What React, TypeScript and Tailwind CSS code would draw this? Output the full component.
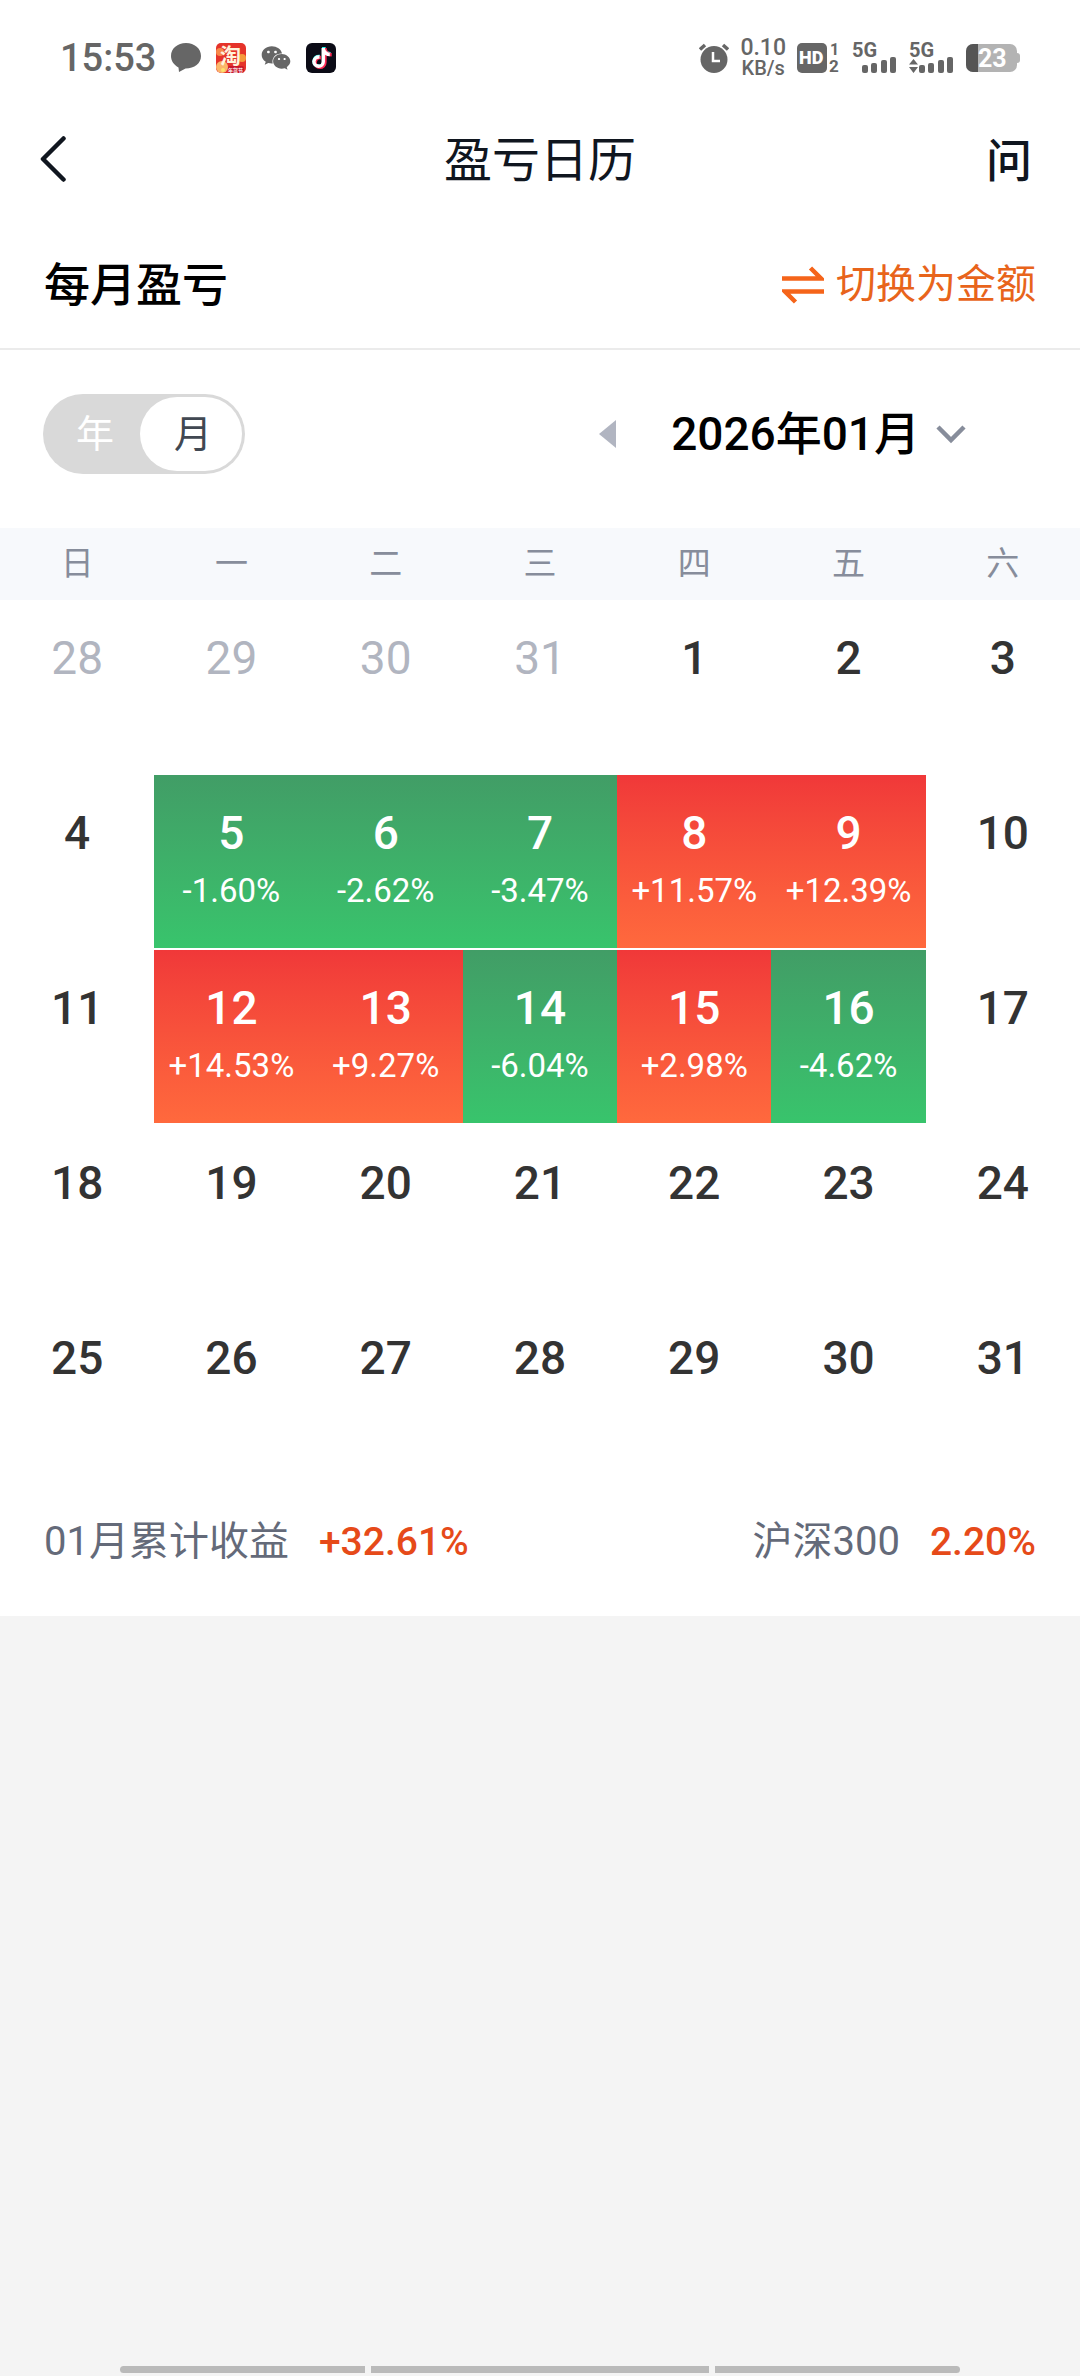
import React, { useState } from "react";
import { FaTiktok, FaWeixin } from "react-icons/fa";

type Mode = "year" | "month";

interface Day {
  day: number;
  outside?: boolean;
  change?: string;
}

const weekdays = ["日", "一", "二", "三", "四", "五", "六"];

const weeks: Day[][] = [
  [
    { day: 28, outside: true },
    { day: 29, outside: true },
    { day: 30, outside: true },
    { day: 31, outside: true },
    { day: 1 },
    { day: 2 },
    { day: 3 },
  ],
  [
    { day: 4 },
    { day: 5, change: "-1.60%" },
    { day: 6, change: "-2.62%" },
    { day: 7, change: "-3.47%" },
    { day: 8, change: "+11.57%" },
    { day: 9, change: "+12.39%" },
    { day: 10 },
  ],
  [
    { day: 11 },
    { day: 12, change: "+14.53%" },
    { day: 13, change: "+9.27%" },
    { day: 14, change: "-6.04%" },
    { day: 15, change: "+2.98%" },
    { day: 16, change: "-4.62%" },
    { day: 17 },
  ],
  [18, 19, 20, 21, 22, 23, 24].map((day) => ({ day })),
  [25, 26, 27, 28, 29, 30, 31].map((day) => ({ day })),
];

const SignalIcon: React.FC<{ active?: boolean }> = ({ active }) => (
  <svg width="46" height="44" viewBox="0 -7 46 44" className="fill-current">
    <text x="0" y="14" fontSize="20" fontWeight="700">
      5G
    </text>
    <rect x="10" y="22" width="6" height="8" rx="2" />
    <rect x="19" y="20" width="6" height="10" rx="2" />
    <rect x="29" y="17" width="6" height="13" rx="2" />
    <rect x="38" y="14" width="6" height="16" rx="2" />
    {active && <path d="M0 21.500 4.500 16 9 21.500zM0 24h9l-4.500 6z" />}
  </svg>
);

const StatusBar: React.FC = () => (
  <div className="flex h-[100px] items-center justify-between px-[60px] pt-4 text-[#666]">
    <div className="flex items-center gap-[15px]">
      <span className="text-[38px] leading-[60px] font-medium">15:53</span>
      <svg width="30" height="30" viewBox="0 0 30 30" className="fill-current">
        <path d="M15 0C6.500 0 0 5.500 0 13c0 5 3 9 7.500 11.500L8 29l6.500-3.500C23.500 25.500 30 20.500 30 13S23.500 0 15 0z" />
      </svg>
      <svg width="30" height="30" viewBox="0 0 30 30">
        <rect width="30" height="30" rx="5" fill="#e5332a" />
        <circle cx="4" cy="9" r="4" fill="#f7894a" />
        <circle cx="26" cy="15" r="4" fill="#f59a3c" />
        <circle cx="6" cy="24" r="6" fill="#fbb66a" />
        <circle cx="7" cy="27" r="2" fill="#fde36b" />
        <rect x="12" y="23" width="16" height="7" rx="2" fill="#c8172b" />
        <text x="4" y="20" fontSize="21" fontWeight="700" fill="#fff3dc">
          淘
        </text>
        <text x="12" y="29" fontSize="5" fontWeight="700" fill="#fff">
          年货节
        </text>
      </svg>
      <FaWeixin className="size-[30px]" />
      <span className="relative flex size-[30px] items-center justify-center rounded-md bg-[#0b0b16]">
        <FaTiktok className="absolute top-1 left-[5px] size-[21px] text-[#25f4ee]" />
        <FaTiktok className="absolute top-[5px] left-[6px] size-[21px] text-[#fe2c55]" />
        <FaTiktok className="relative size-5 text-white" />
      </span>
    </div>
    <div className="flex items-center gap-[11px]">
      <svg width="30" height="30" viewBox="0 0 30 30">
        <path
          d="M1 6.500 6 2M24 2l5 4.500"
          stroke="currentColor"
          strokeWidth="3.500"
        />
        <circle cx="15" cy="16.500" r="13.500" fill="currentColor" />
        <path
          d="M14 9v9h7"
          stroke="#fff"
          strokeWidth="2.500"
          fill="none"
        />
      </svg>
      <div className="flex flex-col items-center font-medium">
        <span className="text-[23px] leading-5">0.10</span>
        <span className="text-[20px] leading-5">KB/s</span>
      </div>
      <svg width="44" height="44" viewBox="0 -7 44 44" className="fill-current">
        <rect width="30" height="30" rx="5" />
        <text x="2" y="21" fontSize="18" fontWeight="900" fill="#fff">
          HD
        </text>
        <text x="33" y="12" fontSize="16" fontWeight="700">
          1
        </text>
        <text x="32" y="29" fontSize="17" fontWeight="700">
          2
        </text>
      </svg>
      <SignalIcon />
      <SignalIcon active />
      <svg width="54" height="28" viewBox="0 0 54 28">
        <rect width="51" height="28" rx="7" fill="#b3b3b3" />
        <path d="M51 9c2 0 3 1 3 3v4c0 2-1 3-3 3z" fill="#b3b3b3" />
        <path d="M12 0H7a7 7 0 0 0-7 7v14a7 7 0 0 0 7 7h5z" fill="#555" />
        <text x="12" y="23" fontSize="25" fontWeight="700" fill="#fff">
          23
        </text>
      </svg>
    </div>
  </div>
);

const DayCell: React.FC<Day> = ({ day, outside, change }) => {
  let tone = "text-[#333] font-medium";
  if (outside) tone = "text-[#b1b5c0]";
  if (change) {
    tone = change.startsWith("+")
      ? "text-white font-medium bg-linear-to-b from-[#f03839] to-[#ff693d]"
      : "text-white font-medium bg-linear-to-b from-[#419d66] to-[#38c46c]";
  }

  return (
    <td className="p-0 pb-[2px]">
      <div className={`h-[173px] pt-7 text-center ${tone}`}>
        <div className="text-[46px] leading-[60px]">{day}</div>
        {change && (
          <div className="mt-2 text-[33px] leading-10 font-normal">
            {change}
          </div>
        )}
      </div>
    </td>
  );
};

const App: React.FC = () => {
  const [mode, setMode] = useState<Mode>("month");

  const modeClass = (value: Mode) =>
    mode === value ? "bg-white text-[#414852]" : "text-white";

  return (
    <div className="flex min-h-screen flex-col bg-[#f4f4f4] font-[Roboto,'Noto_Sans_CJK_SC',sans-serif]">
      <div className="bg-white">
        <StatusBar />

        <header className="grid h-[118px] grid-cols-3 items-center px-10 text-[#10161f]">
          <button type="button" aria-label="返回" className="justify-self-start">
            <svg width="28" height="48" viewBox="0 0 28 48" fill="none">
              <path
                d="M23.500 3.500 3 24l20.500 20.500"
                stroke="currentColor"
                strokeWidth="4.500"
                strokeLinecap="round"
                strokeLinejoin="round"
              />
            </svg>
          </button>
          <h1 className="pt-1 text-center text-[48px] leading-[60px]">
            盈亏日历
          </h1>
          <button
            type="button"
            className="justify-self-end pt-1 pr-2 text-[46px] leading-[60px] font-medium"
          >
            问
          </button>
        </header>

        <div className="flex h-[132px] items-center justify-between border-b-2 border-[#ebebeb] px-11 pt-1">
          <h2 className="text-[46px] leading-[60px] font-medium text-black">
            每月盈亏
          </h2>
          <button
            type="button"
            className="flex items-center gap-3 text-[40px] leading-[60px] text-[#e8641b]"
          >
            <svg width="42" height="38" viewBox="0 0 42 38" fill="none">
              <path
                d="M0 12.500h39L28.500 2M42 25.500H3L13.500 36"
                stroke="#f5641a"
                strokeWidth="4.500"
              />
            </svg>
            切换为金额
          </button>
        </div>

        <div className="flex items-center justify-between pt-11 pr-[114px] pb-[54px] pl-[43px]">
          <div className="flex h-20 w-[202px] rounded-full bg-[#d9d9d9] p-[3px] text-[38px] leading-[74px]">
            <button
              type="button"
              aria-pressed={mode === "year"}
              onClick={() => setMode("year")}
              className={`flex-1 rounded-full pl-1 ${modeClass("year")}`}
            >
              年
            </button>
            <button
              type="button"
              aria-pressed={mode === "month"}
              onClick={() => setMode("month")}
              className={`w-[102px] rounded-full pl-1 ${modeClass("month")}`}
            >
              月
            </button>
          </div>
          <div className="flex items-center">
            <button type="button" aria-label="上个月" className="mr-[55px]">
              <svg width="17" height="28" viewBox="0 0 17 28">
                <path d="M17 0v28L0 14z" fill="#b1b5c1" />
              </svg>
            </button>
            <button
              type="button"
              className="flex items-center gap-4 text-[46px] leading-[60px] font-medium text-black"
            >
              2026年01月
              <svg width="30" height="20" viewBox="0 0 30 20" fill="none">
                <path d="m2 3 13 13L28 3" stroke="#878d9b" strokeWidth="4.500" />
              </svg>
            </button>
          </div>
        </div>

        <table className="w-full table-fixed border-separate border-spacing-0">
          <thead>
            <tr className="h-[72px] bg-[#f7f9fc] text-[33px] leading-10 text-[#878d9b]">
              {weekdays.map((name) => (
                <th key={name} scope="col" className="p-0 font-normal">
                  {name}
                </th>
              ))}
            </tr>
          </thead>
          <tbody>
            {weeks.map((week, i) => (
              <tr key={i}>
                {week.map((d) => (
                  <DayCell key={d.day} {...d} />
                ))}
              </tr>
            ))}
          </tbody>
        </table>

        <div className="flex h-[141px] items-center justify-between px-11 pb-2 text-[40px] leading-[60px] text-[#646a79]">
          <div className="flex items-baseline gap-[30px]">
            <span>01月累计收益</span>
            <span className="text-[39px] font-medium text-[#e64a19]">
              +32.61%
            </span>
          </div>
          <div className="flex items-baseline gap-[30px]">
            <span>沪深300</span>
            <span className="text-[39px] font-medium text-[#e64a19]">
              2.20%
            </span>
          </div>
        </div>
      </div>

      {/* system navigation bar */}
      <div className="mt-auto flex gap-[6px] px-[120px] pb-[3px]">
        <div className="h-[7px] flex-[245] rounded-l-full bg-[#bababa]" />
        <div className="h-[7px] flex-[338] bg-[#bababa]" />
        <div className="h-[7px] flex-[245] rounded-r-full bg-[#bababa]" />
      </div>
    </div>
  );
};

export default App;
